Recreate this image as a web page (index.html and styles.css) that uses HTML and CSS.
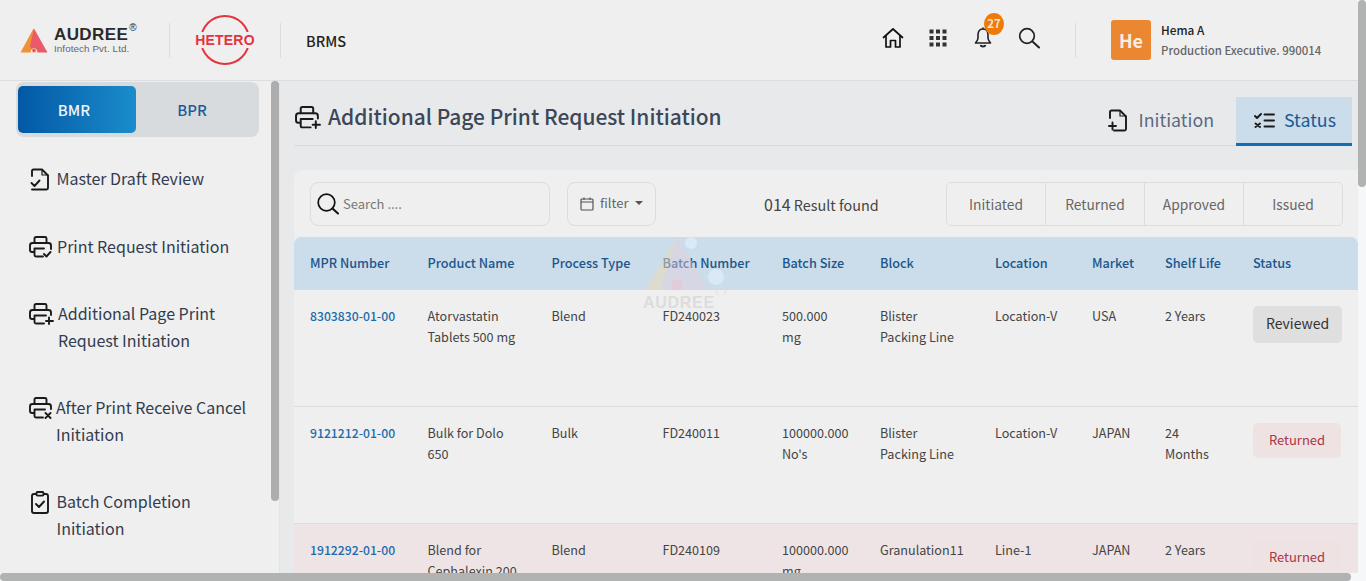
FILE: index.html
```html
<!DOCTYPE html>
<html lang="en">
<head>
<meta charset="utf-8">
<title>Additional Page Print Request Initiation</title>
<link rel="stylesheet" href="styles.css">
</head>
<body>
<div class="app">
  <header class="topbar">
    <div class="brand">
      <svg class="audree-mark" width="28" height="25" viewBox="0 0 28 25">
        <path d="M13.5 0.5 L0.5 24.5 H18 L15 6 Z" fill="#f0913a"/>
        <path d="M14 0.5 L27.5 24.5 H17.5 Q17 20 14 20 Q12.5 20 11.5 21 L10 18 Z" fill="#ea5a68"/>
        <path d="M10.5 24.5 Q11 20.5 14 20.5 Q17 20.5 17.5 24.5 Z" fill="#efefef"/>
        <circle cx="14" cy="22.5" r="1.8" fill="#e8505e"/>
      </svg>
      <div class="audree-text">
        <div class="audree-name">AUDREE<sup class="reg">®</sup></div>
        <div class="audree-sub">Infotech Pvt. Ltd.</div>
      </div>
    </div>
    <div class="vrule"></div>
    <div class="hetero">
      <svg width="62" height="52" viewBox="0 0 62 52">
        <circle cx="31" cy="26" r="24" fill="none" stroke="#e4343f" stroke-width="2"/>
        <rect x="0" y="18" width="62" height="16" fill="#efefef"/>
        <text x="31" y="31" text-anchor="middle" class="hetero-text">HETERO</text>
      </svg>
    </div>
    <div class="vrule"></div>
    <div class="app-name">BRMS</div>
    <div class="top-icons">
      <svg class="ti" width="22" height="22" viewBox="0 0 22 22" fill="none" stroke="#111" stroke-width="1.7" stroke-linejoin="round" stroke-linecap="round"><path d="M1.5 10.5 L11 2 L20.5 10.5"/><path d="M4 8.5 V20 H8.5 V13.5 H13.5 V20 H18 V8.5"/></svg>
      <svg class="ti" width="18" height="18" viewBox="0 0 18 18" fill="#333"><rect x="0.5" y="0.5" width="4" height="4"/><rect x="7" y="0.5" width="4" height="4"/><rect x="13.5" y="0.5" width="4" height="4"/><rect x="0.5" y="7" width="4" height="4"/><rect x="7" y="7" width="4" height="4"/><rect x="13.5" y="7" width="4" height="4"/><rect x="0.5" y="13.5" width="4" height="4"/><rect x="7" y="13.5" width="4" height="4"/><rect x="13.5" y="13.5" width="4" height="4"/></svg>
      <div class="bell">
        <svg width="18" height="21" viewBox="0 0 18 21" fill="none" stroke="#222" stroke-width="1.6" stroke-linejoin="round"><path d="M9 2 C5 2 4 5 4 8 V11 C4 13 3 14 1.5 16 H16.5 C15 14 14 13 14 11 V8 C14 5 13 2 9 2 Z"/><path d="M9 0.5 V2"/><path d="M6.5 18 C7 20 11 20 11.5 18" stroke-width="1.8"/></svg>
        <span class="badge">27</span>
      </div>
      <svg class="ti" width="22" height="22" viewBox="0 0 22 22" fill="none" stroke="#222" stroke-width="1.7" stroke-linecap="round"><circle cx="9" cy="9" r="7.3"/><path d="M15 15 L21 20.5" stroke-width="2"/></svg>
    </div>
    <div class="vrule user-rule"></div>
    <div class="avatar">He</div>
    <div class="user">
      <div class="user-name">Hema A</div>
      <div class="user-role">Production Executive. 990014</div>
    </div>
  </header>

  <div class="layout">
    <aside class="sidebar">
      <div class="toggle">
        <div class="toggle-btn active">BMR</div>
        <div class="toggle-btn">BPR</div>
      </div>
      <nav class="menu">
        <div class="menu-item first">
          <svg class="mi doc" width="20" height="23" viewBox="0 0 20 23" fill="none" stroke="#1a1a1a" stroke-width="1.9" stroke-linejoin="round" stroke-linecap="round"><path d="M2 8 V3 Q2 1.5 3.5 1.5 H12 L18 7.5 V20 Q18 21.5 16.5 21.5 H2"/><path d="M12 1.5 V7 H18" stroke-width="1.2"/><path d="M1.5 15 L4.5 18 L9.5 12.5"/></svg>
          <span>Master Draft Review</span>
        </div>
        <div class="menu-item">
          <svg class="mi" width="23" height="22" viewBox="0 0 23 22" fill="none" stroke="#1a1a1a" stroke-width="1.9" stroke-linejoin="round" stroke-linecap="round"><path d="M5.5 7 V2.5 Q5.5 1 7 1 H16 Q17.5 1 17.5 2.5 V7"/><path d="M5 16 H3 Q1 16 1 14 V9.5 Q1 7 3.5 7 H19.5 Q22 7 22 9.5 V13"/><path d="M14 20.5 H7 Q5.5 20.5 5.5 19 V12.5 H15"/><path d="M15 18 L17.5 20.5 L21.5 16"/></svg>
          <span>Print Request Initiation</span>
        </div>
        <div class="menu-item wide">
          <svg class="mi" width="25" height="22" viewBox="0 0 25 22" fill="none" stroke="#1a1a1a" stroke-width="1.9" stroke-linejoin="round" stroke-linecap="round"><path d="M5.5 7 V2.5 Q5.5 1 7 1 H16 Q17.5 1 17.5 2.5 V7"/><path d="M5 16 H3 Q1 16 1 14 V9.5 Q1 7 3.5 7 H19.5 Q22 7 22 9.5 V12"/><path d="M15 20.5 H7 Q5.5 20.5 5.5 19 V12.5 H17"/><path d="M20 14.5 V21 M17 18 H24"/></svg>
          <span>Additional Page Print<br>Request Initiation</span>
        </div>
        <div class="menu-item tight">
          <svg class="mi" width="23" height="22" viewBox="0 0 23 22" fill="none" stroke="#1a1a1a" stroke-width="1.9" stroke-linejoin="round" stroke-linecap="round"><path d="M5.5 7 V2.5 Q5.5 1 7 1 H16 Q17.5 1 17.5 2.5 V7"/><path d="M5 16 H3 Q1 16 1 14 V9.5 Q1 7 3.5 7 H19.5 Q22 7 22 9.5 V12"/><path d="M14 20.5 H7 Q5.5 20.5 5.5 19 V12.5 H16"/><path d="M16.5 16 L21.5 21 M21.5 16 L16.5 21"/></svg>
          <span>After Print Receive Cancel<br>Initiation</span>
        </div>
        <div class="menu-item">
          <svg class="mi doc" width="20" height="23" viewBox="0 0 20 23" fill="none" stroke="#1a1a1a" stroke-width="1.9" stroke-linejoin="round" stroke-linecap="round"><rect x="2" y="3" width="16" height="19" rx="2"/><rect x="6.5" y="1" width="7" height="3.6" rx="1" fill="#efefef"/><path d="M6 13 L9 16 L14 10.5"/></svg>
          <span>Batch Completion<br>Initiation</span>
        </div>
      </nav>
      <div class="side-thumb"></div>
    </aside>

    <main class="main">
      <div class="title-bar">
        <svg class="title-icon" width="26" height="23" viewBox="0 0 25 22" fill="none" stroke="#1a1a1a" stroke-width="1.9" stroke-linejoin="round" stroke-linecap="round"><path d="M5.5 7 V2.5 Q5.5 1 7 1 H16 Q17.5 1 17.5 2.5 V7"/><path d="M5 16 H3 Q1 16 1 14 V9.5 Q1 7 3.5 7 H19.5 Q22 7 22 9.5 V12"/><path d="M15 20.5 H7 Q5.5 20.5 5.5 19 V12.5 H17"/><path d="M20 14.5 V21 M17 18 H24"/></svg>
        <h1 class="title">Additional Page Print Request Initiation</h1>
        <div class="tabs">
          <div class="tab">
            <svg width="20" height="23" viewBox="0 0 20 23" fill="none" stroke="#1a1a1a" stroke-width="1.9" stroke-linejoin="round" stroke-linecap="round"><path d="M2 9 V3 Q2 1.5 3.5 1.5 H12 L18 7.5 V20 Q18 21.5 16.5 21.5 H6"/><path d="M12 1.5 V7 H18" stroke-width="1.2"/><path d="M1 17 H8 M4.5 13.5 V20.5"/></svg>
            <span>Initiation</span>
          </div>
          <div class="tab current">
            <svg width="21" height="15" viewBox="0 0 21 15" fill="none" stroke="#1a1a1a" stroke-width="1.9" stroke-linecap="round" stroke-linejoin="round"><path d="M1 3 L3 5 L7 1"/><path d="M1.5 10.5 L6 14 M6 10.5 L1.5 14"/><path d="M10.5 1.5 H20 M10.5 7.5 H20 M10.5 13.5 H20"/></svg>
            <span>Status</span>
          </div>
        </div>
      </div>

      <section class="card">
        <div class="toolbar">
          <div class="search">
            <svg width="22" height="22" viewBox="0 0 22 22" fill="none" stroke="#111" stroke-width="1.7" stroke-linecap="round"><circle cx="9.5" cy="9.5" r="8.3"/><path d="M15.5 15.5 L21 20.5" stroke-width="2"/></svg>
            <span>Search ....</span>
          </div>
          <div class="filter">
            <svg width="14" height="14" viewBox="0 0 14 14" fill="none" stroke="#555" stroke-width="1.2"><rect x="1" y="2" width="12" height="11" rx="1"/><path d="M1 5 H13 M4 0.5 V3 M10 0.5 V3"/></svg>
            <span>filter</span>
            <i class="caret"></i>
          </div>
          <div class="result"><b>014</b> Result found</div>
          <div class="seg">
            <div class="seg-item">Initiated</div>
            <div class="seg-item">Returned</div>
            <div class="seg-item">Approved</div>
            <div class="seg-item">Issued</div>
          </div>
        </div>

        <div class="table-wrap">
          <table class="grid">
            <colgroup>
              <col class="c1"><col class="c2"><col class="c3"><col class="c4"><col class="c5"><col class="c6"><col class="c7"><col class="c8"><col class="c9"><col class="c10">
            </colgroup>
            <thead>
              <tr><th>MPR Number</th><th>Product Name</th><th>Process Type</th><th>Batch Number</th><th>Batch Size</th><th>Block</th><th>Location</th><th>Market</th><th>Shelf Life</th><th>Status</th></tr>
            </thead>
            <tbody>
              <tr>
                <td><a class="link">8303830-01-00</a></td><td>Atorvastatin Tablets 500 mg</td><td>Blend</td><td>FD240023</td><td>500.000 mg</td><td>Blister Packing Line</td><td>Location-V</td><td>USA</td><td>2 Years</td>
                <td class="status-cell"><span class="pill reviewed">Reviewed</span></td>
              </tr>
              <tr>
                <td><a class="link">9121212-01-00</a></td><td>Bulk for Dolo 650</td><td>Bulk</td><td>FD240011</td><td>100000.000 No's</td><td>Blister Packing Line</td><td>Location-V</td><td>JAPAN</td><td>24 Months</td>
                <td class="status-cell"><span class="pill returned">Returned</span></td>
              </tr>
              <tr class="flagged">
                <td><a class="link">1912292-01-00</a></td><td>Blend for Cephalexin 200</td><td>Blend</td><td>FD240109</td><td>100000.000 mg</td><td>Granulation11</td><td>Line-1</td><td>JAPAN</td><td>2 Years</td>
                <td class="status-cell"><span class="pill returned">Returned</span></td>
              </tr>
            </tbody>
          </table>
          <div class="watermark">
            <svg width="90" height="60" viewBox="0 0 90 60">
              <path d="M34 2 L18 55 H2 Z" fill="#eadbb8" opacity="0.55"/>
              <path d="M34 2 L66 55 H18 Z" fill="#e6cfdc" opacity="0.45"/>
              <rect x="29" y="45" width="10" height="10" fill="#e6c8d6" opacity="0.7"/>
              <circle cx="48" cy="8" r="6" fill="#d9e9f5"/>
              <circle cx="73" cy="42" r="8" fill="#d9e9f5"/>
              <circle cx="78" cy="57" r="4.5" fill="none" stroke="#e0e0e0"/>
            </svg>
            <div class="wm-text">AUDREE</div>
          </div>
        </div>
      </section>
    </main>
  </div>
</div>
<div class="track-v"><div class="thumb-v"></div></div>
<div class="track-h"><div class="thumb-h"></div></div>
</body>
</html>
```
FILE: styles.css
```css
* { box-sizing: border-box; }
html, body { height: 100%; overflow: hidden; }
body {
  margin: 0;
  font-family: "Noto Sans CJK SC", "Noto Sans", sans-serif;
  color: #333;
  font-size: 14px;
  background: #f6f7f9;
}
.app { width: 1358px; height: 573px; overflow: hidden; }
.topbar {
  height: 81px;
  background: #efefef;
  border-bottom: 1px solid #dcdddf;
  display: flex;
  align-items: center;
  padding-left: 20px;
}
.brand { display: flex; align-items: center; width: 149px; }
.audree-mark { flex: none; }
.audree-text { margin-left: 6px; margin-top: 1px; }
.audree-name { font-family: "Liberation Sans", sans-serif; font-weight: 700; font-size: 17px; line-height: 17px; color: #2b2b2b; letter-spacing: 0.4px; position: relative; }
.reg { font-size: 10px; font-weight: 400; position: absolute; top: -3px; margin-left: 1px; line-height: 1; }
.audree-sub { font-size: 9.8px; line-height: 12px; color: #666; letter-spacing: 0.1px; font-family: "Liberation Sans", sans-serif; }
.vrule { width: 1px; height: 35px; background: #dcdddf; flex: none; }
.hetero { width: 110px; display: flex; justify-content: center; }
.hetero-text { font-family: "Liberation Sans", sans-serif; font-weight: 700; font-size: 14px; fill: #e4343f; letter-spacing: 0.2px; }
.app-name { margin-left: 25px; width: 576px; font-size: 14.5px; font-weight: 500; color: #222; }
.top-icons { display: flex; align-items: center; margin-top: -5px; }
.top-icons .ti, .bell { flex: none; }
.top-icons > :nth-child(2) { margin-left: 25px; }
.top-icons > :nth-child(3) { margin-left: 27px; }
.top-icons > :nth-child(4) { margin-left: 26px; }
.bell { position: relative; width: 18px; height: 21px; }
.badge {
  position: absolute; left: 10px; top: -14px;
  width: 20px; height: 22px; border-radius: 50%;
  background: #f07a08; color: #f3e7d6;
  font-size: 11.5px; font-weight: 700; line-height: 21px; text-align: center;
}
.user-rule { margin-left: 35px; }
.avatar {
  width: 40px; height: 40px; margin-left: 35px;
  background: #ec8731; color: #f7efe6; border-radius: 3px;
  font-size: 18px; font-weight: 700; text-align: center; line-height: 40px;
}
.user { margin-left: 10px; }
.user-name { font-size: 11.8px; line-height: 20px; color: #222; font-weight: 500; }
.user-role { font-size: 11.4px; line-height: 20px; color: #666; font-weight: 500; white-space: nowrap; }
.layout { display: flex; height: 492px; background: #efefef; }
.sidebar { width: 280px; flex: none; border-right: 1px solid #e2e3e5; background: #efefef; position: relative; }
.side-thumb { position: absolute; left: 271px; top: 0; width: 8px; height: 420px; background: #adadad; border-radius: 4px; }
.toggle {
  margin: 1px 12px 0 16px; height: 55px; background: #d8dbde; border-radius: 8px;
  padding: 4px 2px; display: flex; width: 243px;
}
.toggle-btn { width: 118px; height: 47px; line-height: 47px; padding-right: 6px; text-align: center; font-size: 15px; font-weight: 500; color: #1b5b98; border-radius: 5px; }
.toggle-btn.active { background: linear-gradient(90deg, #0358a5, #1a8ccb); color: #eef5fb; }
.menu { padding: 28px 0 0 29px; display: flex; flex-direction: column; gap: 40px; }
.menu-item { display: flex; align-items: flex-start; gap: 5px; font-size: 16px; line-height: 27px; color: #333c4e; white-space: nowrap; }
.menu-item.first { margin-bottom: 1px; }
.menu-item .mi { flex: none; margin-top: 3px; }
.menu-item .doc { margin-left: 1px; margin-right: 1.5px; }
.menu-item.wide { gap: 4px; }
.menu-item.tight { gap: 4px; }
.main { flex: 1; min-width: 0; background: #e8e9eb; padding: 16px 0 0 14px; overflow: hidden; }
.title-bar { display: flex; align-items: flex-start; height: 49px; width: 1058px; border-bottom: 1px solid #d9dadd; }
.title-icon { flex: none; margin: 9px 7px 0 1px; }
.title { margin: 0; font-size: 20.95px; font-weight: 500; color: #3c4757; line-height: 38px; white-space: nowrap; flex: 1; }
.tabs { display: flex; height: 49px; }
.tab { display: flex; align-items: center; gap: 11px; font-size: 17.8px; color: #5c6b80; padding: 0 22px 0 0; border-bottom: 3px solid transparent; }
.tab span { margin-top: -2px; }
.tab.current { width: 116px; background: #cbdcea; border-bottom-color: #136db3; color: #1c5a92; padding: 0 0 0 18px; gap: 9px; }
.card { background: #efefef; margin-top: 24px; border-radius: 8px 0 0 0; width: 1064px; height: 1400px; }
.toolbar { height: 67px; display: flex; align-items: flex-start; padding: 12px 0 0 16px; }
.search { width: 240px; height: 44px; border: 1px solid #dcdddf; border-radius: 8px; display: flex; align-items: center; gap: 4px; padding-left: 6px; color: #777; font-size: 13px; }
.search span { margin-top: -2px; }
.filter { width: 89px; height: 44px; margin-left: 17px; border: 1px solid #dcdddf; border-radius: 8px; display: flex; align-items: center; gap: 6px; padding-left: 12px; color: #666; font-size: 13px; }
.filter span { margin-top: -3px; }
.caret { width: 0; height: 0; border-left: 4px solid transparent; border-right: 4px solid transparent; border-top: 4px solid #555; margin: -2px 0 0 1px; }
.result { width: 182px; margin-left: 108px; line-height: 44px; font-size: 14.4px; color: #444; white-space: nowrap; }
.result b { font-weight: 400; font-size: 16px; }
.seg { display: flex; width: 397px; height: 44px; border: 1px solid #dcdddf; border-radius: 5px; }
.seg-item { flex: 1; text-align: center; line-height: 42px; color: #666; font-size: 13.8px; border-left: 1px solid #dcdddf; }
.seg-item:first-child { border-left: 0; }
.table-wrap { position: relative; }
.grid { width: 1064px; table-layout: fixed; border-collapse: separate; border-spacing: 0; }
.c1 { width: 117.5px; } .c2 { width: 124px; } .c3 { width: 111px; } .c4 { width: 119.5px; } .c5 { width: 98px; }
.c6 { width: 115px; } .c7 { width: 97px; } .c8 { width: 73px; } .c9 { width: 88px; } .c10 { width: 121px; }
.grid thead tr { background: #cbdcea; }
.grid th { height: 53px; text-align: left; padding: 0 0 2px 16px; font-size: 12.7px; font-weight: 500; color: #1c568c; white-space: nowrap; background: #cbdcea; }
.grid th:first-child { border-top-left-radius: 8px; }
.grid th:last-child { border-top-right-radius: 8px; }
.grid td { height: 117px; vertical-align: top; padding: 15px 16px 0 16px; font-size: 12.6px; line-height: 21px; color: #444; border-bottom: 1px solid #dcdde1; }
.grid td.status-cell { padding: 16px 0 0 16px; }
.link { color: #1a6cad; font-weight: 500; white-space: nowrap; font-size: 12.2px; }
.flagged td { background: #efe4e5; }
.pill { display: block; text-align: center; border-radius: 5px; }
.reviewed { width: 89px; height: 37px; line-height: 35px; background: #dfdfdf; color: #333; font-size: 14px; }
.returned { width: 88px; height: 35px; line-height: 33px; background: #efe2e3; color: #aa3645; font-size: 13px; }
.watermark { position: absolute; left: 349px; top: -2px; width: 90px; pointer-events: none; }
.watermark svg { display: block; }
.wm-text { font-family: "Liberation Sans", sans-serif; font-weight: 700; font-size: 16px; color: #dcdcdc; letter-spacing: 0.7px; margin-top: -1px; line-height: 18px; }
.track-v { position: fixed; right: 0; top: 0; bottom: 0; width: 8px; background: #f6f7f9; }
.thumb-v { width: 8px; height: 187px; background: #b1b3b2; border-radius: 4px; }
.track-h { position: fixed; left: 0; bottom: 0; right: 0; height: 8px; background: #f6f7f9; }
.thumb-h { width: 1351px; height: 8px; background: #b1b3b2; border-radius: 4px; }
```
